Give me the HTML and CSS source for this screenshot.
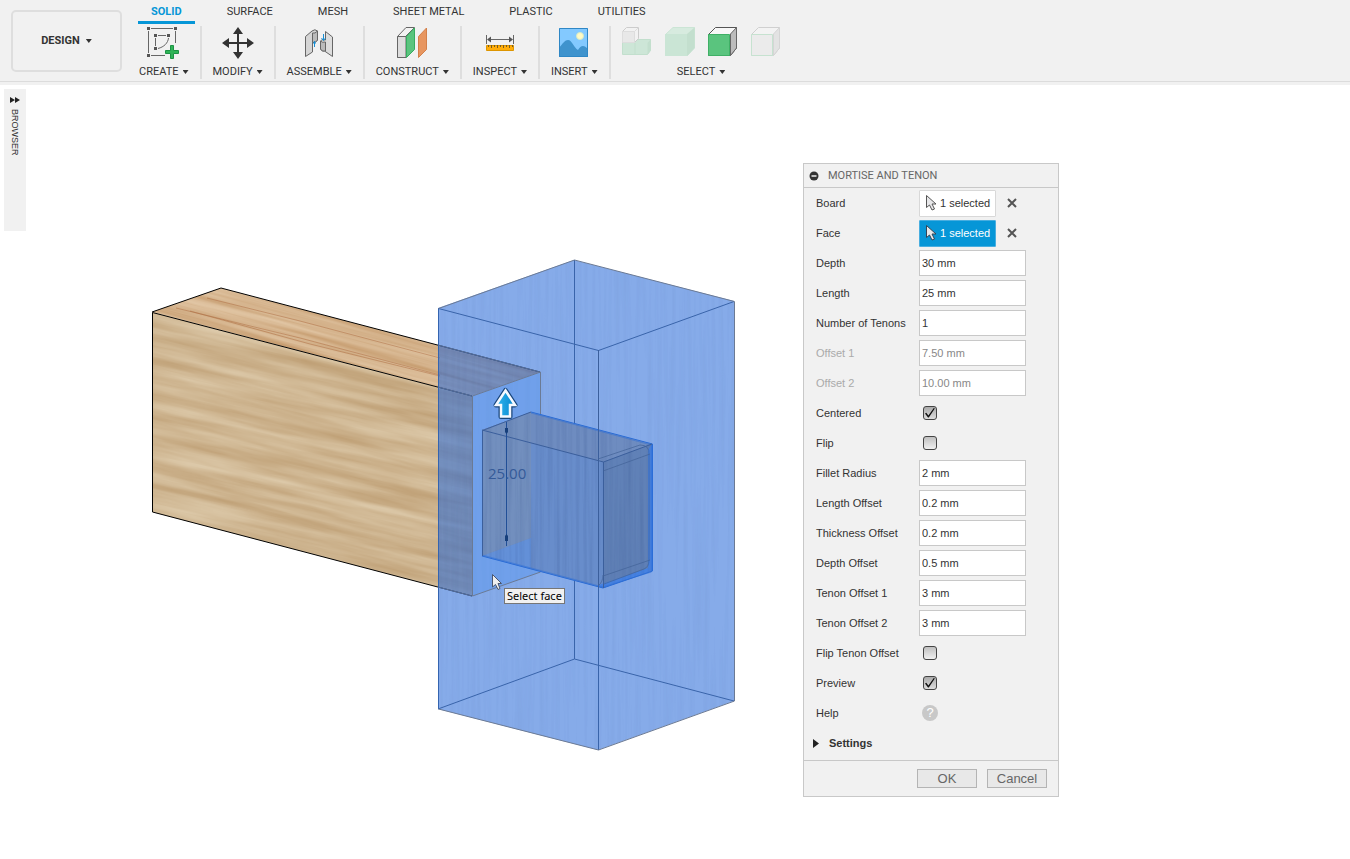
FILE: index.html
```html
<!DOCTYPE html>
<html lang="en">
<head>
<meta charset="utf-8">
<title>Mortise and Tenon</title>
<link rel="stylesheet" href="styles.css">
</head>
<body>
<header class="toolbar">
  <button class="workspace" type="button">DESIGN <span class="caret"></span></button>
  <div class="ribbon">
    <nav class="tabs">
      <a class="tab tab-active" href="#solid">SOLID</a>
      <a class="tab" href="#surface">SURFACE</a>
      <a class="tab" href="#mesh">MESH</a>
      <a class="tab" href="#sheet-metal">SHEET METAL</a>
      <a class="tab" href="#plastic">PLASTIC</a>
      <a class="tab" href="#utilities">UTILITIES</a>
    </nav>
    <div class="groups">
      <div class="group">
        <svg class="icon" viewBox="147 26 34 34" width="34" height="34" aria-hidden="true">
          <g fill="none" stroke="#666" stroke-width="1">
            <path d="M151 28.500H173M148.500 31V53M175.500 31V43M151 55.500H165M158 35.500H166M155.500 38V46M158 48.500C164 47 168 43 168.500 38"/>
          </g>
          <path fill="#555" d="M147 27h3v3h-3zM174 27h3v3h-3zM147 54h3v3h-3zM154 34h3v3h-3zM167 34h3v3h-3zM154 47h3v3h-3z"/>
          <path fill="#2fb457" stroke="#1d9344" stroke-width="1" d="M170.500 45.500h3v5h5v3h-5v5h-3v-5h-5v-3h5z"/>
        </svg>
        <button class="group-label" type="button">CREATE <span class="caret"></span></button>
      </div>
      <div class="group">
        <svg class="icon" viewBox="221 26 32 34" width="32" height="34" aria-hidden="true">
          <path stroke="#333" stroke-width="2" d="M226 43H248M237 32V54"/>
          <path fill="#333" d="M237 27l5 7h-10zM237 59l5-7h-10zM221 43l7-5v10zM253 43l-7-5v10z"/>
        </svg>
        <button class="group-label" type="button">MODIFY <span class="caret"></span></button>
      </div>
      <div class="group">
        <svg class="icon" viewBox="302 26 32 34" width="32" height="34" aria-hidden="true">
          <g stroke="#666" stroke-width="1" stroke-linejoin="round">
            <path fill="#d5d5d5" d="M304.500 36.500L311 31Q314 28.500 316.500 31V40Q315 43 311.500 42.500V52L304.500 56.500z"/>
            <path fill="#bbb" d="M311.500 33Q314 34 316.500 31V40Q315 43 311.500 42.500z"/>
            <path fill="#ddd" d="M324.500 31.500L331.500 37V56.500L323.500 51Q321 52 319.500 49V41Q320 39 324.500 40z"/>
            <path fill="#bbb" d="M319.500 41Q321 43 324.500 42V51Q321 52 319.500 49z"/>
          </g>
          <path fill="none" stroke="#178ed4" d="M313.500 41V47M322.500 34V40M320.500 38L322.500 40.500L324.500 38M312 43h3"/>
        </svg>
        <button class="group-label" type="button">ASSEMBLE <span class="caret"></span></button>
      </div>
      <div class="group">
        <svg class="icon" viewBox="395 26 34 34" width="34" height="34" aria-hidden="true">
          <path fill="#f2f2f2" stroke="#666" d="M397.500 36.500L406 27.500H414.500L406 36V57.500H397.500z"/>
          <path fill="#ddd" stroke="#666" d="M397.500 36.500H406V57.500H397.500z"/>
          <path fill="#5ac47e" stroke="#36ad60" d="M406.500 36.500L414.500 28V49.500L406.500 57.500z"/>
          <path fill="#e79660" stroke="#d3804a" d="M418.500 36.500L426.500 28V49.500L418.500 57.500z"/>
        </svg>
        <button class="group-label" type="button">CONSTRUCT <span class="caret"></span></button>
      </div>
      <div class="group">
        <svg class="icon" viewBox="485 26 32 34" width="32" height="34" aria-hidden="true">
          <path stroke="#666" d="M487.500 35V44M514.500 35V44M489 39.500H513"/>
          <path fill="#555" d="M488 39.500l4-3v6zM514 39.500l-4-3v6z"/>
          <path fill="#ffad0a" stroke="#dd9500" d="M487.500 45.500H514.500V50.500H487.500z"/>
          <path stroke="#765b20" d="M489.500 45v2M492.500 45v3M495.500 45v2M498.500 45v3M501.500 45v2M504.500 45v3M507.500 45v2M510.500 45v3M513.500 45v2"/>
        </svg>
        <button class="group-label" type="button">INSPECT <span class="caret"></span></button>
      </div>
      <div class="group">
        <svg class="icon" viewBox="559 26 32 34" width="32" height="34" aria-hidden="true">
          <path fill="#83c9ff" d="M560 28h29v29h-29z"/>
          <path fill="#3f93cd" d="M560 48C564 43 566 40 569 40C573 40 575 48 579 50C582 45 585 45 589 49V57H560z"/>
          <circle cx="581" cy="36" r="3.500" fill="#fffac3" stroke="#d6e9c8"/>
          <path fill="none" stroke="#2f87c5" d="M560.500 28.500h28v28h-28z"/>
        </svg>
        <button class="group-label" type="button">INSERT <span class="caret"></span></button>
      </div>
      <div class="group">
        <div class="icon-row">
          <svg class="icon" viewBox="0 0 30 34" width="30" height="34" aria-hidden="true">
            <path fill="#cde6d7" stroke="#c2dfcd" d="M.5 16.500L3.500 13.500H28.500V24.500L25.500 28.500H.5z"/>
            <path fill="#c3dfce" d="M25.500 17L28.500 13.500V24.500L25.500 28.500z"/>
            <path fill="none" stroke="#c2dfcd" d="M13 17V28"/>
            <path fill="#f2f2f2" stroke="#ccc" d="M.5 5.500L4.500 1.500H16.500V12.500L12.500 16.500H.5z"/>
            <path fill="#e8e8e8" stroke="#ddd" d="M.5 5.500H12.500V16.500H.5zM12.500 5.500L16.500 1.500"/>
          </svg>
          <svg class="icon" viewBox="0 0 30 34" width="30" height="34" aria-hidden="true">
            <path fill="#d7ebdf" stroke="#cbe5d5" d="M.5 8.500L8 1.500H29.500V22L22.500 29.500H.5z"/>
            <path fill="#cae5d5" d="M0 8H22V30H0z"/><path fill="#c3dfce" d="M22 8L29.500 1.500V22L22 30z"/>
          </svg>
          <svg class="icon" viewBox="0 0 30 34" width="30" height="34" aria-hidden="true">
            <path fill="#f7f7f7" stroke="#555" d="M.5 8.500L7.500 1.500H28.500V22L22.500 29.500H.5z"/>
            <path fill="#bcbcbc" stroke="#666" d="M22.500 8L28.500 1.500V22L22.500 29.500z"/>
            <path fill="#5ac47e" stroke="#3fb066" d="M.5 8.500H21.500V29.500H.5z"/>
          </svg>
          <svg class="icon" viewBox="0 0 30 34" width="30" height="34" aria-hidden="true">
            <path fill="#f3f3f3" stroke="#d0d0d0" d="M.5 8.500L7.500 1.500H28.500V22L22.500 29.500H.5z"/>
            <path fill="#e3e3e3" stroke="#d5d5d5" d="M22.500 8L28.500 1.500V22L22.500 29.500z"/>
            <path fill="#ebebeb" stroke="#c6e2d0" d="M.5 8.500H21.500V29.500H.5z"/>
          </svg>
        </div>
        <button class="group-label" type="button">SELECT <span class="caret"></span></button>
      </div>
    </div>
  </div>
</header>

<main class="workarea">
  <aside class="browser">
    <button class="browser-toggle" type="button">
      <svg viewBox="0 0 10 6" width="10" height="6" aria-hidden="true"><path fill="#222" d="M0 0l5 3-5 3zM5 0l5 3-5 3z"/></svg>
      <span class="browser-name">BROWSER</span>
    </button>
  </aside>

  <svg class="scene" viewBox="140 250 610 510" width="610" height="510" role="img" aria-label="Tenon board meeting a mortise block">
    <defs>
      <filter id="grain" x="0" y="0" width="1" height="1" color-interpolation-filters="sRGB">
        <feTurbulence type="fractalNoise" baseFrequency="0.006 0.09" numOctaves="5" seed="8"/>
        <feColorMatrix values=".17 0 0 0 .72  .24 0 0 0 .585  .3 0 0 0 .41  0 0 0 0 1"/>
      </filter>
      <filter id="topgrain" x="0" y="0" width="1" height="1" color-interpolation-filters="sRGB">
        <feTurbulence type="fractalNoise" baseFrequency="0.004 0.16" numOctaves="4" seed="21"/>
        <feColorMatrix values=".18 0 0 0 .75  .28 0 0 0 .57  .36 0 0 0 .38  0 0 0 0 1"/>
      </filter>
      <filter id="streaks" x="0" y="0" width="1" height="1" color-interpolation-filters="sRGB">
        <feTurbulence type="fractalNoise" baseFrequency="0.25 0.006" numOctaves="3" seed="5"/>
        <feColorMatrix values="0 0 0 0 .16  0 0 0 0 .27  0 0 0 0 .5  .9 0 0 0 -.36"/>
      </filter>
      <clipPath id="front"><path d="M152 312L472 396V596L152 512z"/></clipPath>
      <clipPath id="top"><path d="M152 312L221 288L540 372L472 396z"/></clipPath>
      <clipPath id="block"><path d="M438 308L574 260L734 301V701L598 750L438 709z"/></clipPath>
      <clipPath id="tenon"><path d="M482 430L531 412L652 444V571L603 588L482 556z"/></clipPath>
      <linearGradient id="arrow"><stop offset="0" stop-color="#31b5ee"/><stop offset="1" stop-color="#0786cf"/></linearGradient>
    </defs>

    <g clip-path="url(#front)"><rect x="140" y="200" width="420" height="420" transform="rotate(13 152 312)" filter="url(#grain)"/></g>
    <g clip-path="url(#top)">
      <rect x="140" y="180" width="460" height="230" transform="rotate(15 152 312)" filter="url(#topgrain)"/>
      <path fill="none" stroke="#ad6b40" stroke-opacity=".5" d="M176 308L300 338L440 375M190 311L310 344L440 376M207 298L300 321L440 358"/>
    </g>
    <path fill="none" stroke="#000" d="M472 396L152.500 312.500V512L472 596M152 312L221 288L540 372"/>

    <path fill="#2366d7" fill-opacity=".55" d="M438 308L574 260L734 301V701L598 750L438 709z"/>
    <g clip-path="url(#block)"><rect x="438" y="260" width="297" height="490" opacity=".1" filter="url(#streaks)"/></g>
    <path fill="#4f90ee" fill-opacity=".4" stroke="#6b7a94" d="M472.500 396L540.500 372V572L472.500 596z"/>
    <path fill="none" stroke="#5b7097" d="M438 345L540 372M438 387L472 396M438 587L472 596"/>
    <path fill="none" stroke="#3964aa" d="M438.500 308.500L598.500 350.500L734 301.500M598.500 350V750M574.500 260V659M438 709L574.500 659L734 701"/>

    <path fill="#6c8bbf" d="M482 430L531 412L652 444V571L603 588L482 556z"/>
    <path fill="#6e8cc0" d="M482 430L531 412L652 444L603 462z"/>
    <path fill="#688dcb" d="M531 443L603 462V588L531 569z"/>
    <path fill="#728fbe" d="M482 430L531 412V538L482 556z"/>
    <path fill="#5e94e9" fill-opacity=".6" d="M482 556L531 538V569z"/>
    <path fill="#6081b7" d="M603 462L652 444V571L603 588z"/>
    <path fill="#4683e4" d="M596 586L648 568V450L652 444V571L603 588z"/>
    <g clip-path="url(#tenon)"><rect x="482" y="412" width="171" height="176" opacity=".35" filter="url(#streaks)"/></g>
    <path fill="none" stroke="#2b6dd7" d="M531 412L652.500 444V571L603 588L482 556"/>
    <path fill="none" stroke="#2b6dd7" stroke-opacity=".5" d="M531 413L651.500 445V572L603 587L482 555"/>
    <path fill="none" stroke="#3b5f9c" d="M482.500 556V430.500L531 412M482 430L603.500 462L652 444M603.500 462V588M598.500 350V588"/>
    <path fill="none" stroke="#426297" stroke-opacity=".7" d="M598 459L640 445Q650 445 649 455V560Q649 567 644 569L604 584M603 471L650 454M603 576L650 560M598 586Q603 582 603 575"/>

    <path stroke="#214f97" d="M506.500 422V546"/>
    <path fill="#173f7b" d="M505 428h3v4l-1.500 2-1.500-2zM505 536l1.500-2 1.500 2v5h-3z"/>
    <text class="dimension" x="488" y="479">25.00</text>

    <path fill="none" stroke="#3464b0" d="M438.500 308V709"/>
    <path fill="none" stroke="#6b7a94" d="M438.500 308.500L574.500 260L734.500 301.500V701L598.500 750L438.500 709"/>

    <path fill="none" stroke="#17457b" stroke-width="5" stroke-linejoin="round" d="M505.500 390.500L515 405H510V416.500H501V405H496z"/>
    <path fill="url(#arrow)" stroke="#f4f8ff" stroke-width="2.500" d="M505.500 390.500L515 405H510V416.500H501V405H496z"/>
    <path fill="#eee" stroke="#4b566d" d="M492.500 574.500V587L495.500 584.500L498 589.500L500 588.500L498 583.500H501.500z"/>
  </svg>
  <div class="tooltip" role="tooltip">Select face</div>

  <form class="dialog">
    <header class="dialog-head">
      <svg viewBox="0 0 10 10" width="10" height="10" aria-hidden="true"><circle cx="5" cy="5" r="4.500" fill="#333"/><path stroke="#f1f1f1" stroke-width="1.500" d="M2.500 5h5"/></svg>
      <h1 class="dialog-title">MORTISE AND TENON</h1>
    </header>
    <div class="rows">
      <div class="row"><span class="name">Board</span>
        <button class="pick" type="button"><svg viewBox="0 0 11 16" width="11" height="16" aria-hidden="true"><path fill="#e8e8ea" stroke="#555" d="M.5 .5V12.500L3.500 10L6 15L8.500 14L6 9H10z"/></svg>1 selected</button>
        <button class="clear" type="button" aria-label="Clear board"><svg viewBox="0 0 10 10" width="10" height="10" aria-hidden="true"><path stroke="#555" stroke-width="2" d="M1 1l8 8M9 1l-8 8"/></svg></button></div>
      <div class="row"><span class="name">Face</span>
        <button class="pick pick-active" type="button"><svg viewBox="0 0 11 16" width="11" height="16" aria-hidden="true"><path fill="#e8e8ea" stroke="#345" d="M.5 .5V12.500L3.500 10L6 15L8.500 14L6 9H10z"/></svg>1 selected</button>
        <button class="clear" type="button" aria-label="Clear face"><svg viewBox="0 0 10 10" width="10" height="10" aria-hidden="true"><path stroke="#555" stroke-width="2" d="M1 1l8 8M9 1l-8 8"/></svg></button></div>
      <div class="row"><label class="name" for="depth">Depth</label><input class="field" id="depth" value="30 mm"></div>
      <div class="row"><label class="name" for="length">Length</label><input class="field" id="length" value="25 mm"></div>
      <div class="row"><label class="name" for="count">Number of Tenons</label><input class="field" id="count" value="1"></div>
      <div class="row row-off"><label class="name" for="off1">Offset 1</label><input class="field" id="off1" value="7.50 mm" disabled></div>
      <div class="row row-off"><label class="name" for="off2">Offset 2</label><input class="field" id="off2" value="10.00 mm" disabled></div>
      <div class="row"><label class="name" for="centered">Centered</label><input class="check" id="centered" type="checkbox" checked></div>
      <div class="row"><label class="name" for="flip">Flip</label><input class="check" id="flip" type="checkbox"></div>
      <div class="row"><label class="name" for="fillet">Fillet Radius</label><input class="field" id="fillet" value="2 mm"></div>
      <div class="row"><label class="name" for="lenoff">Length Offset</label><input class="field" id="lenoff" value="0.2 mm"></div>
      <div class="row"><label class="name" for="thickoff">Thickness Offset</label><input class="field" id="thickoff" value="0.2 mm"></div>
      <div class="row"><label class="name" for="depoff">Depth Offset</label><input class="field" id="depoff" value="0.5 mm"></div>
      <div class="row"><label class="name" for="ten1">Tenon Offset 1</label><input class="field" id="ten1" value="3 mm"></div>
      <div class="row"><label class="name" for="ten2">Tenon Offset 2</label><input class="field" id="ten2" value="3 mm"></div>
      <div class="row"><label class="name" for="flipten">Flip Tenon Offset</label><input class="check" id="flipten" type="checkbox"></div>
      <div class="row"><label class="name" for="preview">Preview</label><input class="check" id="preview" type="checkbox" checked></div>
      <div class="row"><span class="name">Help</span><button class="help" type="button" aria-label="Help">?</button></div>
      <button class="settings" type="button"><svg viewBox="0 0 6 9" width="6" height="9" aria-hidden="true"><path fill="#222" d="M0 0l6 4.500-6 4.500z"/></svg>Settings</button>
    </div>
    <footer class="dialog-foot">
      <button class="action" type="button">OK</button>
      <button class="action" type="button">Cancel</button>
    </footer>
  </form>
</main>
</body>
</html>
```

FILE: styles.css
```css
* { box-sizing: border-box; }

body {
  margin: 0;
  min-height: 100vh;
  display: flex;
  flex-direction: column;
  background: #fff;
  color: #333;
  font: 11px/14px "Liberation Sans", Arial, sans-serif;
}

button {
  margin: 0;
  padding: 0;
  border: 0;
  background: none;
  color: inherit;
  font: inherit;
}

svg { display: block; flex: none; }

/* Toolbar */
.toolbar {
  display: flex;
  align-items: flex-start;
  padding-bottom: 6px;
  background: linear-gradient(#dcdcdc, #dcdcdc) 0 81px / 100% 1px no-repeat #f1f1f1;
  font-family: Roboto, "Liberation Sans", sans-serif;
}

.workspace {
  display: flex;
  align-items: center;
  justify-content: center;
  gap: 6px;
  width: 111px;
  height: 62px;
  margin: 10px 6px 0 11px;
  border: 2px solid #dedede;
  border-radius: 5px;
  font-weight: 700;
}

.caret {
  width: 6px;
  height: 4px;
  background: #333;
  clip-path: polygon(0 0, 100% 0, 50% 100%);
}

.ribbon { flex: 1; }

.tabs {
  display: flex;
  gap: 19px;
  height: 24px;
  padding-left: 10px;
}

.tab {
  padding: 5px 13px 0;
  color: #333;
  text-decoration: none;
}

.tab-active {
  border-bottom: 3px solid #0696d7;
  color: #0696d7;
  font-weight: 700;
}

.groups {
  display: flex;
  padding-top: 2px;
}

.group {
  display: flex;
  flex-direction: column;
  align-items: center;
  gap: 5px;
  padding: 0 11px;
  border-right: 2px solid #dedede;
}

.group:last-child { border-right: 0; }

.icon-row { display: flex; gap: 13px; }

.group-label {
  display: flex;
  align-items: center;
  gap: 4px;
}

/* Canvas */
.workarea {
  position: relative;
  flex: 1;
  padding: 4px;
}

.browser {
  width: 22px;
  height: 142px;
  background: #f1f1f1;
}

.browser-toggle {
  display: flex;
  flex-direction: column;
  align-items: center;
  gap: 6px;
  width: 100%;
  padding-top: 8px;
}

.browser-name {
  writing-mode: vertical-rl;
  font-size: 9px;
}

.scene {
  position: absolute;
  left: 140px;
  top: 165px;
}

.dimension {
  fill: #345a98;
  font: 15px "Open Sans", sans-serif;
}

.tooltip {
  position: absolute;
  left: 504px;
  top: 503px;
  padding: 0 2px;
  border: 1px solid #767676;
  background: #f1f1f1;
  color: #000;
  font: 11px/14px "Noto Sans", sans-serif;
}

/* Dialog */
.dialog {
  position: absolute;
  left: 803px;
  top: 78px;
  width: 256px;
  border: 1px solid #c8c8c8;
  background: #f1f1f1;
}

.dialog-head {
  display: flex;
  align-items: center;
  gap: 9px;
  height: 24px;
  padding: 0 5px;
  border-bottom: 1px solid #c8c8c8;
}

.dialog-title {
  margin: 0;
  color: #666;
  font: 11px/14px Roboto, "Liberation Sans", sans-serif;
}

.rows { padding-bottom: 2px; }

.row {
  display: flex;
  align-items: center;
  height: 30px;
  padding-left: 12px;
}

.name { width: 103px; }

.row-off .name { color: #aaa; }

.field {
  width: 107px;
  height: 26px;
  padding: 0 2px;
  border: 1px solid #c8c8c8;
  background: #fff;
  color: #333;
  font: inherit;
}

.field:disabled { color: #888; }

.pick {
  display: flex;
  align-items: center;
  gap: 3px;
  height: 27px;
  padding: 0 5px 0 6px;
  border: 1px solid #d8d8d8;
  border-radius: 1px;
  background: #fff;
}

.pick-active {
  border-color: #48aee0;
  background: #0696d7;
  color: #fff;
}

.clear { margin-left: 11px; }

.check {
  appearance: none;
  width: 14px;
  height: 14px;
  margin: 0 0 0 4px;
  border: 1px solid #444;
  border-radius: 3px;
  background: linear-gradient(#c0c0c0, #f0f0f0);
}

.check:checked { background: linear-gradient(#aaa, #ddd); }

.check:checked::after {
  content: "";
  display: block;
  width: 10px;
  height: 10px;
  margin: 1px;
  background: #111;
  clip-path: polygon(0 55%, 13% 47%, 34% 76%, 88% 0, 98% 6%, 38% 96%, 30% 96%);
}

.help {
  width: 16px;
  height: 16px;
  margin-left: 3px;
  border-radius: 50%;
  background: #c8c8c8;
  color: #fff;
  font-size: 13px;
}

.settings {
  display: flex;
  align-items: center;
  gap: 10px;
  width: 100%;
  height: 30px;
  padding-left: 9px;
  font-weight: 700;
}

.dialog-foot {
  display: flex;
  justify-content: flex-end;
  gap: 10px;
  padding: 8px 11px;
  border-top: 1px solid #c8c8c8;
}

.action {
  width: 60px;
  height: 19px;
  border: 1px solid #b4b4b4;
  background: #e8e8e8;
  color: #666;
  font-size: 13px;
}
```
